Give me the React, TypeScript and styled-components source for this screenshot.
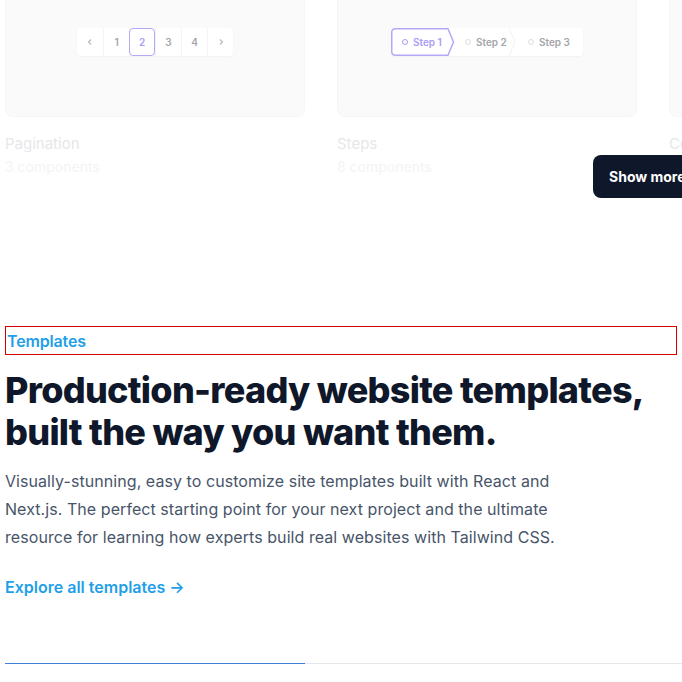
import React from "react";
import styled, { createGlobalStyle } from "styled-components";

const Global = createGlobalStyle`
  html, body { margin: 0; padding: 0; background: #fff; overflow: hidden; }
  body { font-family: Inter, "Noto Sans", sans-serif; -webkit-font-smoothing: antialiased; }
  * { box-sizing: border-box; }
`;

const Page = styled.div`
  position: relative;
  width: 682px;
  height: 682px;
  overflow: hidden;
`;

const CardGrid = styled.div`
  display: grid;
  grid-template-columns: repeat(3, 300px);
  gap: 32px;
  padding-left: 5px;
  margin-top: -33px;
`;

const Card = styled.div`
  display: flex;
  flex-direction: column;
`;

const Preview = styled.div`
  height: 150px;
  border-radius: 8px;
  background: #fafafb;
  border: 1px solid #f6f6f8;
  display: flex;
  align-items: center;
  justify-content: center;
`;

const CardTitle = styled.div`
  margin-top: 17px;
  font-size: 15px;
  line-height: 20px;
  color: #e6e7ea;
`;

const CardMeta = styled.div`
  margin-top: 3px;
  font-size: 14px;
  line-height: 20px;
  color: #f3f4f6;
`;

const Pager = styled.div`
  display: flex;
  background: #fff;
  border-radius: 4px;
  box-shadow: 0 1px 2px rgba(0, 0, 0, 0.04);
  height: 28px;
`;

const PageItem = styled.div<{ $active?: boolean }>`
  width: 26px;
  height: 28px;
  display: flex;
  align-items: center;
  justify-content: center;
  font-size: 10px;
  font-weight: 600;
  color: ${(p) => (p.$active ? "#a89cf5" : "#a3a5ab")};
  border: ${(p) => (p.$active ? "1.5px solid #b4a9f7" : "none")};
  border-left: ${(p) => (p.$active ? "1.5px solid #b4a9f7" : "1px solid #f3f4f6")};
  border-radius: ${(p) => (p.$active ? "4px" : "0")};
  &:first-child { border-left: none; }
`;

const Steps = styled.div`
  display: flex;
  background: #fff;
  border-radius: 4px;
  box-shadow: 0 1px 2px rgba(0, 0, 0, 0.04);
  height: 28px;
  align-items: center;
`;

const Step = styled.div<{ $active?: boolean; $w: number }>`
  position: relative;
  width: ${(p) => p.$w}px;
  height: 28px;
  display: flex;
  align-items: center;
  gap: 5px;
  padding-left: 11px;
  font-size: 10px;
  font-weight: 600;
  color: ${(p) => (p.$active ? "#a89cf5" : "#a3a5ab")};
`;

const StepShape = styled.svg`
  position: absolute;
  left: 0;
  top: 0;
  overflow: visible;
`;

const Dot = styled.span<{ $active?: boolean }>`
  position: relative;
  width: 6px;
  height: 6px;
  border-radius: 50%;
  border: 1.5px solid ${(p) => (p.$active ? "#a89cf5" : "#dcdde0")};
`;

const StepLabel = styled.span`
  position: relative;
`;

const ShowMore = styled.button`
  position: absolute;
  left: 593px;
  top: 155px;
  width: 130px;
  height: 43px;
  border: none;
  border-radius: 8px;
  background: #0f172a;
  color: #fff;
  font-family: Inter, sans-serif;
  font-size: 14px;
  font-weight: 700;
  text-align: left;
  padding-left: 16px;
`;

const Section = styled.section`
  padding: 0 5px;
  margin-top: 149px;
`;

const Eyebrow = styled.div`
  border: 1px solid #d40000;
  height: 29px;
  display: flex;
  align-items: center;
  padding-left: 1px;
  font-size: 16px;
  font-weight: 600;
  color: #1f9fe9;
  letter-spacing: -0.01em;
`;

const Heading = styled.h2`
  margin: 14px 0 0;
  font-size: 36px;
  line-height: 42px;
  font-weight: 800;
  color: #0f172a;
  letter-spacing: -0.02em;
`;

const Body = styled.p`
  margin: 14px 0 0;
  max-width: 580px;
  font-size: 16px;
  line-height: 28px;
  color: #475569;
  letter-spacing: 0.004em;
`;

const Explore = styled.a`
  display: inline-block;
  margin-top: 26px;
  font-size: 16px;
  font-weight: 600;
  color: #1f9fe9;
  text-decoration: none;
`;

const Progress = styled.div`
  margin-top: 66px;
  margin-right: -5px;
  height: 1px;
  background: #e5e7eb;
  display: flex;
`;

const ProgressFill = styled.div`
  height: 1px;
  background: #3f7fd6;
`;

const pages = ["‹", "1", "2", "3", "4", "›"];

export default function App() {
  return (
    <Page>
      <Global />
      <CardGrid>
        <Card>
          <Preview>
            <Pager>
              {pages.map((p, i) => (
                <PageItem key={i} $active={p === "2"}>
                  {p === "‹" ? (
                    <svg width="8" height="8" viewBox="0 0 8 8"><path d="M5 1.5 2.5 4 5 6.5" fill="none" stroke="#b8bac0" strokeWidth="1.2" /></svg>
                  ) : p === "›" ? (
                    <svg width="8" height="8" viewBox="0 0 8 8"><path d="M3 1.5 5.5 4 3 6.5" fill="none" stroke="#b8bac0" strokeWidth="1.2" /></svg>
                  ) : (
                    p
                  )}
                </PageItem>
              ))}
            </Pager>
          </Preview>
          <CardTitle>Pagination</CardTitle>
          <CardMeta>3 components</CardMeta>
        </Card>
        <Card>
          <Preview>
            <Steps>
              <Step $active $w={63}>
                <StepShape width="63" height="28">
                  <path d="M4 0.75 H57 L62.5 14 L57 27.25 H4 A3.25 3.25 0 0 1 0.75 24 V4 A3.25 3.25 0 0 1 4 0.75 Z" fill="#fff" stroke="#b4a9f7" strokeWidth="1.5" />
                </StepShape>
                <Dot $active />
                <StepLabel>Step 1</StepLabel>
              </Step>
              <Step $w={63}>
                <StepShape width="63" height="28">
                  <path d="M55 0 L61 14 L55 28" fill="none" stroke="#f1f2f4" strokeWidth="1" />
                </StepShape>
                <Dot />
                <StepLabel>Step 2</StepLabel>
              </Step>
              <Step $w={66}>
                <Dot />
                <StepLabel>Step 3</StepLabel>
              </Step>
            </Steps>
          </Preview>
          <CardTitle>Steps</CardTitle>
          <CardMeta>8 components</CardMeta>
        </Card>
        <Card>
          <Preview />
          <CardTitle>Command palettes</CardTitle>
          <CardMeta>2 components</CardMeta>
        </Card>
      </CardGrid>
      <ShowMore>Show more</ShowMore>
      <Section>
        <Eyebrow>Templates</Eyebrow>
        <Heading>
          Production-ready website templates,
          <br />
          built the way you want them.
        </Heading>
        <Body>
          Visually-stunning, easy to customize site templates built with React and Next.js. The perfect starting point
          for your next project and the ultimate resource for learning how experts build real websites with Tailwind
          CSS.
        </Body>
        <Explore href="#">Explore all templates →</Explore>
        <Progress>
          <ProgressFill style={{ width: "300px" }} />
        </Progress>
      </Section>
    </Page>
  );
}
